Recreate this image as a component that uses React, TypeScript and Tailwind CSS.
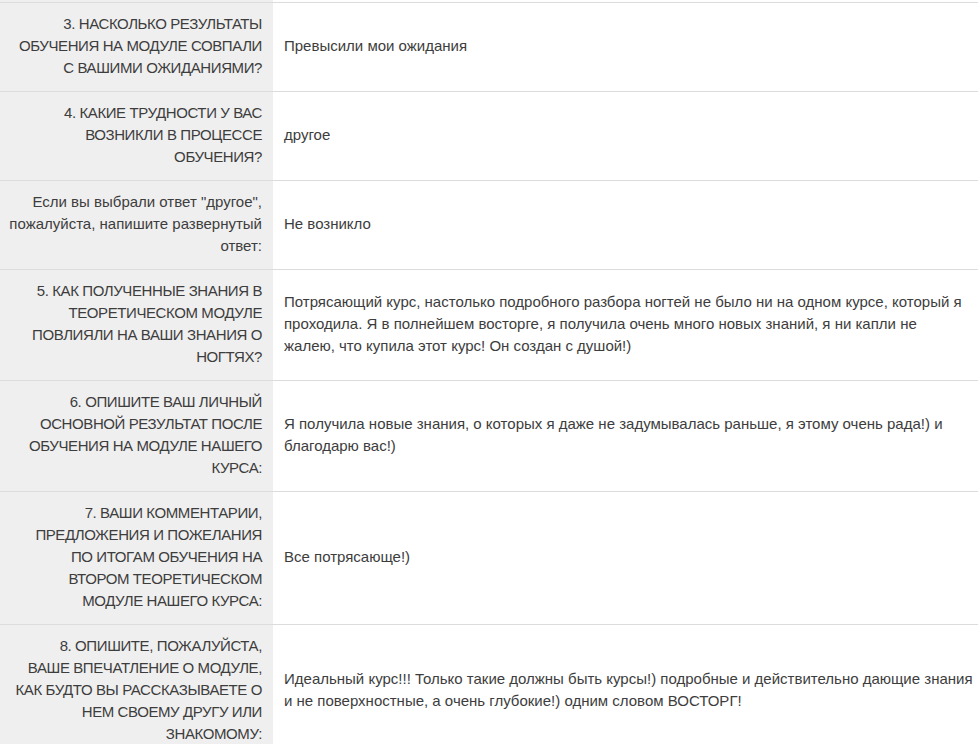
import React from "react";

type Row = { q: string[]; a: string[]; caps?: boolean };

const rows: Row[] = [
  {
    caps: true,
    q: ["3. НАСКОЛЬКО РЕЗУЛЬТАТЫ", "ОБУЧЕНИЯ НА МОДУЛЕ СОВПАЛИ", "С ВАШИМИ ОЖИДАНИЯМИ?"],
    a: ["Превысили мои ожидания"],
  },
  {
    caps: true,
    q: ["4. КАКИЕ ТРУДНОСТИ У ВАС", "ВОЗНИКЛИ В ПРОЦЕССЕ", "ОБУЧЕНИЯ?"],
    a: ["другое"],
  },
  {
    q: ["Если вы выбрали ответ \"другое\",", "пожалуйста, напишите развернутый", "ответ:"],
    a: ["Не возникло"],
  },
  {
    caps: true,
    q: ["5. КАК ПОЛУЧЕННЫЕ ЗНАНИЯ В", "ТЕОРЕТИЧЕСКОМ МОДУЛЕ", "ПОВЛИЯЛИ НА ВАШИ ЗНАНИЯ О", "НОГТЯХ?"],
    a: [
      "Потрясающий курс, настолько подробного разбора ногтей не было ни на одном курсе, который я",
      "проходила. Я в полнейшем восторге, я получила очень много новых знаний, я ни капли не",
      "жалею, что купила этот курс! Он создан с душой!)",
    ],
  },
  {
    caps: true,
    q: ["6. ОПИШИТЕ ВАШ ЛИЧНЫЙ", "ОСНОВНОЙ РЕЗУЛЬТАТ ПОСЛЕ", "ОБУЧЕНИЯ НА МОДУЛЕ НАШЕГО", "КУРСА:"],
    a: [
      "Я получила новые знания, о которых я даже не задумывалась раньше, я этому очень рада!) и",
      "благодарю вас!)",
    ],
  },
  {
    caps: true,
    q: [
      "7. ВАШИ КОММЕНТАРИИ,",
      "ПРЕДЛОЖЕНИЯ И ПОЖЕЛАНИЯ",
      "ПО ИТОГАМ ОБУЧЕНИЯ НА",
      "ВТОРОМ ТЕОРЕТИЧЕСКОМ",
      "МОДУЛЕ НАШЕГО КУРСА:",
    ],
    a: ["Все потрясающе!)"],
  },
  {
    caps: true,
    q: [
      "8. ОПИШИТЕ, ПОЖАЛУЙСТА,",
      "ВАШЕ ВПЕЧАТЛЕНИЕ О МОДУЛЕ,",
      "КАК БУДТО ВЫ РАССКАЗЫВАЕТЕ О",
      "НЕМ СВОЕМУ ДРУГУ ИЛИ",
      "ЗНАКОМОМУ:",
    ],
    a: [
      "Идеальный курс!!! Только такие должны быть курсы!) подробные и действительно дающие знания",
      "и не поверхностные, а очень глубокие!) одним словом ВОСТОРГ!",
    ],
  },
];

export default function App() {
  return (
    <div
      className="w-[978px] h-[744px] overflow-hidden bg-white text-[15px] leading-[22px] text-[#3d3d3d]"
      style={{ fontFamily: "'Liberation Sans', Arial, sans-serif" }}
    >
      <div className="flex h-[2px]">
        <div className="w-[273px] bg-[#efefef]" />
        <div className="flex-1" />
      </div>
      {rows.map((r, i) => (
        <div key={i} className="flex border-t border-[#dcdcdc]">
          <div
            className={
              r.caps
                ? "w-[273px] shrink-0 bg-[#efefef] pt-[10px] pb-[12px] pr-[11px] text-right tracking-[-0.4px]"
                : "w-[273px] shrink-0 bg-[#efefef] pt-[10px] pb-[12px] pr-[11px] text-right"
            }
          >
            {r.q.map((l, j) => (
              <div key={j} className="whitespace-nowrap">
                {l}
              </div>
            ))}
          </div>
          <div className="flex-1 flex flex-col justify-center pl-[11px] pt-[10px] pb-[12px]">
            {r.a.map((l, j) => (
              <div key={j} className="whitespace-nowrap">
                {l}
              </div>
            ))}
          </div>
        </div>
      ))}
    </div>
  );
}
